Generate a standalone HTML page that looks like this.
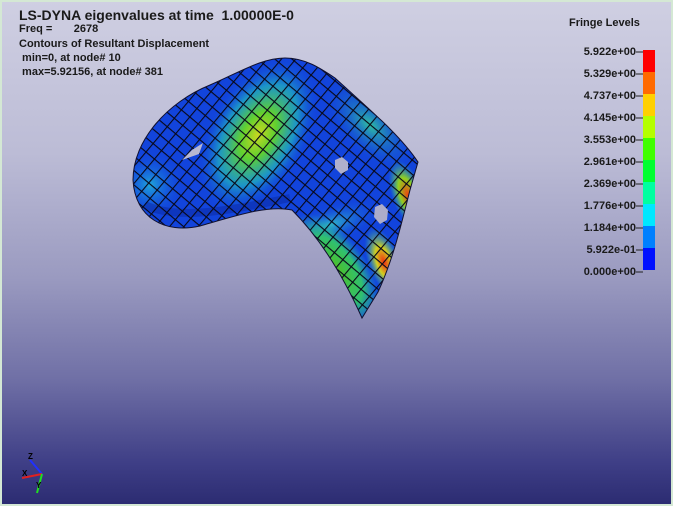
<!DOCTYPE html>
<html><head><meta charset="utf-8"><style>
html,body{margin:0;padding:0}
body{width:673px;height:506px;overflow:hidden;position:relative;font-family:"Liberation Sans",Arial,sans-serif;
background:#d4e8d4;}
#bg{position:absolute;left:2px;top:2px;width:669px;height:502px;
background:linear-gradient(to bottom,#cfcfe2 0%,#bcbcd6 30%,#9a9ac0 55%,#7070a6 75%,#3e3e86 92%,#2c2c72 100%);}
.t{position:absolute;font-weight:bold;font-size:11px;color:#1a1a1a;white-space:pre;line-height:13px}
.lab{position:absolute;left:566px;width:70px;text-align:right;font-size:11px;font-weight:bold;color:#1a1a1a;line-height:12px}
</style></head><body>
<div id="bg"></div>
<div class="t" style="left:19px;top:7px;font-size:14px;line-height:16px">LS-DYNA eigenvalues at time  1.00000E-0</div>
<div class="t" style="left:19px;top:23px">Freq =       2678</div>
<div class="t" style="left:19px;top:38px">Contours of Resultant Displacement</div>
<div class="t" style="left:19px;top:52px"> min=0, at node# 10</div>
<div class="t" style="left:19px;top:66px"> max=5.92156, at node# 381</div>
<div class="t" style="left:569px;top:17px">Fringe Levels</div>
<svg width="673" height="506" style="position:absolute;left:0;top:0">
<defs>
<radialGradient id="y1" cx="0" cy="0" r="1" gradientUnits="userSpaceOnUse" gradientTransform="translate(258,135) rotate(-60) scale(85,50)">
<stop offset="0" stop-color="#c8d820"/><stop offset="0.3" stop-color="#60d030"/><stop offset="0.65" stop-color="#20b0c0" stop-opacity="0.75"/><stop offset="1" stop-color="#1040e0" stop-opacity="0"/></radialGradient>
<radialGradient id="g1" cx="0" cy="0" r="1" gradientUnits="userSpaceOnUse" gradientTransform="translate(335,270) rotate(55) scale(65,32)">
<stop offset="0" stop-color="#50c020"/><stop offset="0.6" stop-color="#30c070"/><stop offset="1" stop-color="#20a0c0" stop-opacity="0"/></radialGradient>
<radialGradient id="r1" cx="0" cy="0" r="1" gradientUnits="userSpaceOnUse" gradientTransform="translate(384,262) rotate(70) scale(36,16)">
<stop offset="0" stop-color="#f03010"/><stop offset="0.45" stop-color="#d0d020"/><stop offset="1" stop-color="#30c0a0" stop-opacity="0"/></radialGradient>
<radialGradient id="r2" cx="0" cy="0" r="1" gradientUnits="userSpaceOnUse" gradientTransform="translate(408,195) rotate(70) scale(36,16)">
<stop offset="0" stop-color="#f04010"/><stop offset="0.5" stop-color="#90d020"/><stop offset="1" stop-color="#30c0a0" stop-opacity="0"/></radialGradient>
<radialGradient id="c1" cx="150" cy="185" r="35" gradientUnits="userSpaceOnUse">
<stop offset="0" stop-color="#20a8d8"/><stop offset="1" stop-color="#1040e0" stop-opacity="0"/></radialGradient>
<radialGradient id="c2" cx="0" cy="0" r="1" gradientUnits="userSpaceOnUse" gradientTransform="translate(370,125) rotate(45) scale(60,30)">
<stop offset="0" stop-color="#30c0a0"/><stop offset="1" stop-color="#1040e0" stop-opacity="0"/></radialGradient>
<radialGradient id="c3" cx="0" cy="0" r="1" gradientUnits="userSpaceOnUse" gradientTransform="translate(330,225) rotate(-20) scale(55,20)">
<stop offset="0" stop-color="#30b8c8"/><stop offset="1" stop-color="#1040e0" stop-opacity="0"/></radialGradient>
<pattern id="grid" width="11" height="11" patternUnits="userSpaceOnUse" patternTransform="rotate(40)">
<path d="M0 0.5H11M0.5 0V11" stroke="#080818" stroke-width="1.2" fill="none"/></pattern>
<clipPath id="cp"><path d="M133,180 C133,140 168,102 210,85 C240,72 262,58 285,58 C305,58 320,68 335,78 C370,110 400,135 418,162 L410,190 C400,230 392,262 378,292 L362,318 C345,280 322,240 292,210 C268,205 238,215 200,226 C165,234 135,218 133,180Z"/></clipPath>
</defs>
<g clip-path="url(#cp)">
<rect x="120" y="50" width="310" height="280" fill="#1244dc"/>
<rect x="120" y="50" width="310" height="280" fill="url(#c1)"/>
<rect x="120" y="50" width="310" height="280" fill="url(#c2)"/>
<rect x="120" y="50" width="310" height="280" fill="url(#c3)"/>
<rect x="120" y="50" width="310" height="280" fill="url(#y1)"/>
<rect x="120" y="50" width="310" height="280" fill="url(#g1)"/>
<rect x="120" y="50" width="310" height="280" fill="url(#r2)"/>
<rect x="120" y="50" width="310" height="280" fill="url(#r1)"/>
<path d="M145,205 C180,222 240,208 290,198" stroke="#0a28a0" stroke-width="8" fill="none" opacity="0.5"/>
<rect x="120" y="50" width="310" height="280" fill="url(#grid)"/>
</g>
<path d="M133,180 C133,140 168,102 210,85 C240,72 262,58 285,58 C305,58 320,68 335,78 C370,110 400,135 418,162 L410,190 C400,230 392,262 378,292 L362,318 C345,280 322,240 292,210 C268,205 238,215 200,226 C165,234 135,218 133,180Z" fill="none" stroke="#101030" stroke-width="1"/>
<path d="M182,160 L192,150 L203,143 L199,154 Z" fill="#b8b8d0"/>
<path d="M335,160 L342,157 L348,162 L348,170 L341,174 L335,168Z" fill="#b0b0cc"/>
<path d="M375,207 L382,204 L388,210 L387,220 L380,224 L374,217Z" fill="#acacca"/>
<rect x="643" y="50" width="12" height="22" fill="#ff0000"/>
<rect x="643" y="72" width="12" height="22" fill="#ff6a00"/>
<rect x="643" y="94" width="12" height="22" fill="#ffd000"/>
<rect x="643" y="116" width="12" height="22" fill="#b4ff00"/>
<rect x="643" y="138" width="12" height="22" fill="#40ff00"/>
<rect x="643" y="160" width="12" height="22" fill="#00ff30"/>
<rect x="643" y="182" width="12" height="22" fill="#00ffa0"/>
<rect x="643" y="204" width="12" height="22" fill="#00e8ff"/>
<rect x="643" y="226" width="12" height="22" fill="#0080ff"/>
<rect x="643" y="248" width="12" height="22" fill="#0010ff"/>
<g stroke="#222" stroke-width="1">
<line x1="636" y1="52" x2="643" y2="52"/><line x1="636" y1="74" x2="643" y2="74"/><line x1="636" y1="96" x2="643" y2="96"/><line x1="636" y1="118" x2="643" y2="118"/><line x1="636" y1="140" x2="643" y2="140"/><line x1="636" y1="162" x2="643" y2="162"/><line x1="636" y1="184" x2="643" y2="184"/><line x1="636" y1="206" x2="643" y2="206"/><line x1="636" y1="228" x2="643" y2="228"/><line x1="636" y1="250" x2="643" y2="250"/><line x1="636" y1="272" x2="643" y2="272"/>
</g>
<line x1="30" y1="460" x2="42" y2="474" stroke="#2030ff" stroke-width="2"/>
<line x1="42" y1="474" x2="22" y2="478" stroke="#e02020" stroke-width="2"/>
<line x1="42" y1="474" x2="37" y2="493" stroke="#20e020" stroke-width="2"/>
<text x="28" y="459" font-size="8" fill="#000" font-weight="bold" font-family="Liberation Sans">Z</text>
<text x="22" y="476" font-size="8" fill="#000" font-weight="bold" font-family="Liberation Sans">X</text>
<text x="36" y="488" font-size="8" fill="#000" font-weight="bold" font-family="Liberation Sans">Y</text>
</svg>
<div class="lab" style="top:46px">5.922e+00</div>
<div class="lab" style="top:68px">5.329e+00</div>
<div class="lab" style="top:90px">4.737e+00</div>
<div class="lab" style="top:112px">4.145e+00</div>
<div class="lab" style="top:134px">3.553e+00</div>
<div class="lab" style="top:156px">2.961e+00</div>
<div class="lab" style="top:178px">2.369e+00</div>
<div class="lab" style="top:200px">1.776e+00</div>
<div class="lab" style="top:222px">1.184e+00</div>
<div class="lab" style="top:244px">5.922e-01</div>
<div class="lab" style="top:266px">0.000e+00</div>
</body></html>
